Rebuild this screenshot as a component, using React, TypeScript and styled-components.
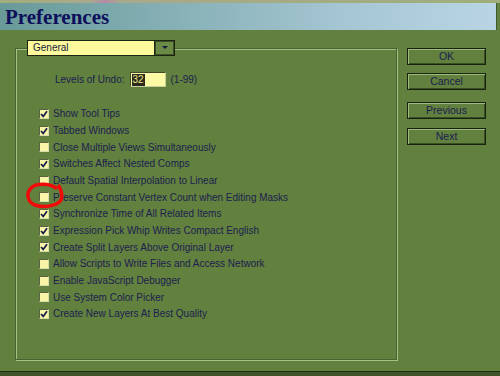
import React from 'react';
import styled, { createGlobalStyle } from 'styled-components';

const GlobalStyle = createGlobalStyle`
  html, body {
    margin: 0;
    padding: 0;
    background: #3d5228;
  }
  body {
    font-family: "Liberation Sans", Arial, sans-serif;
  }
`;

const Window = styled.div`
  position: relative;
  width: 500px;
  height: 376px;
  display: flex;
  flex-direction: column;
  background: #62803e;
  overflow: hidden;
`;

const TopStrip = styled.div`
  height: 3px;
  background: linear-gradient(90deg, #a3ad7a 0%, #a9a98c 18%, #b48aa8 21%, #a9a98c 24%, #9fae7a 100%);
`;

const TitleBar = styled.div`
  height: 27px;
  display: flex;
  align-items: center;
  padding: 2px 0 0 5px;
  box-sizing: border-box;
  margin-right: 3px;
  background: linear-gradient(90deg, #689a98 0%, #86b0b6 35%, #a6c6d4 70%, #b9d5e4 100%);
  border-right: 1px solid #3f5a2c;
`;

const Title = styled.h1`
  margin: 0;
  font-family: "Liberation Serif", "Times New Roman", serif;
  font-weight: 700;
  font-size: 21px;
  color: #0d0f5c;
`;

const Body = styled.div`
  flex: 1;
  display: flex;
  padding: 18px 0 11px 15px;
  color: #1c2150;
  font-size: 10px;
`;

const GroupBox = styled.div`
  width: 380px;
  height: 310px;
  border: 1px solid #4a6230;
  box-shadow: 1px 1px 0 #a4c286, inset 1px 1px 0 #a4c286;
  display: flex;
  flex-direction: column;
`;

const Dropdown = styled.div`
  margin: -9px 0 0 11px;
  width: 148px;
  height: 16px;
  box-sizing: border-box;
  display: flex;
  border: 1px solid #1a2410;
  background: #fdfa9e;
`;

const DropdownText = styled.span`
  flex: 1;
  padding-left: 5px;
  line-height: 14px;
  color: #1a1c3c;
`;

const DropdownButton = styled.span`
  width: 19px;
  display: flex;
  align-items: center;
  justify-content: center;
  background: #6b8a46;
  border-left: 1px solid #1a2410;
  box-shadow: inset 1px 1px 0 #3c4f26, inset -1px -1px 0 #3c4f26;

  &::after {
    content: '';
    border-left: 3px solid transparent;
    border-right: 3px solid transparent;
    border-top: 3px solid #141a40;
  }
`;

const UndoRow = styled.div`
  display: flex;
  align-items: center;
  gap: 5px;
  margin: 16px 0 0 39px;
  height: 16px;
`;

const UndoInput = styled.div`
  width: 36px;
  height: 15px;
  box-sizing: border-box;
  background: #fdfaa6;
  border-top: 1px solid #3f4a2a;
  border-left: 1px solid #3f4a2a;
  border-right: 1px solid #c9cf9a;
  border-bottom: 1px solid #c9cf9a;
  display: flex;
  align-items: center;
  padding-left: 1px;
`;

const Selected = styled.span`
  background: #2b2a1c;
  color: #f3ea8a;
  line-height: 12px;
  padding: 0 1px;
`;

const List = styled.div`
  margin: 18px 0 0 23px;
  display: flex;
  flex-direction: column;
`;

const Row = styled.div`
  height: 16.67px;
  display: flex;
  align-items: center;
  gap: 4px;
`;

const Box = styled.span`
  width: 10px;
  height: 10px;
  box-sizing: border-box;
  background: #f8f4a8;
  border-top: 1px solid #5c6244;
  border-left: 1px solid #5c6244;
  border-right: 1px solid #d8dcaa;
  border-bottom: 1px solid #d8dcaa;
  display: flex;
  align-items: center;
  justify-content: center;
`;

const Buttons = styled.div`
  margin-left: 10px;
  display: flex;
  flex-direction: column;
`;

const Button = styled.button<{ $gap: number }>`
  margin-top: ${p => p.$gap}px;
  width: 79px;
  height: 17px;
  padding: 0;
  background: #62803e;
  border: 1px solid #182210;
  box-shadow: inset 1px 1px 0 #9ebb7e, inset -1px -1px 0 #3a5022;
  color: #1c2150;
  font-family: "Liberation Sans", Arial, sans-serif;
  font-size: 10.5px;
  line-height: 14px;
`;

const BottomBar = styled.div`
  height: 5px;
  border-top: 1px solid #1e2c12;
  background: #3f5529;
`;

const Annotation = styled.svg`
  position: absolute;
  left: 0;
  top: 0;
  pointer-events: none;
`;

const Check = () => (
  <svg width="8" height="8" viewBox="0 0 8 8">
    <path d="M1 4 L3.2 6.4 L7 1.2" fill="none" stroke="#141a4a" strokeWidth="1.7" />
  </svg>
);

const options: [string, boolean][] = [
  ['Show Tool Tips', true],
  ['Tabbed Windows', true],
  ['Close Multiple Views Simultaneously', false],
  ['Switches Affect Nested Comps', true],
  ['Default Spatial Interpolation to Linear', false],
  ['Preserve Constant Vertex Count when Editing Masks', false],
  ['Synchronize Time of All Related Items', true],
  ['Expression Pick Whip Writes Compact English', true],
  ['Create Split Layers Above Original Layer', true],
  ['Allow Scripts to Write Files and Access Network', false],
  ['Enable JavaScript Debugger', false],
  ['Use System Color Picker', false],
  ['Create New Layers At Best Quality', true],
];

export default function App() {
  return (
    <Window>
      <GlobalStyle />
      <TopStrip />
      <TitleBar>
        <Title>Preferences</Title>
      </TitleBar>
      <Body>
        <GroupBox>
          <Dropdown>
            <DropdownText>General</DropdownText>
            <DropdownButton />
          </Dropdown>
          <UndoRow>
            <span>Levels of Undo:</span>
            <UndoInput><Selected>32</Selected></UndoInput>
            <span>(1-99)</span>
          </UndoRow>
          <List>
            {options.map(([label, on]) => (
              <Row key={label}>
                <Box>{on && <Check />}</Box>
                <span>{label}</span>
              </Row>
            ))}
          </List>
        </GroupBox>
        <Buttons>
          <Button $gap={0}>OK</Button>
          <Button $gap={8}>Cancel</Button>
          <Button $gap={12}>Previous</Button>
          <Button $gap={9}>Next</Button>
        </Buttons>
      </Body>
      <BottomBar />
      <Annotation width="500" height="376">
        <path
          d="M56 188 C49 183, 36 183, 31 188 C26 193, 27 202, 35 205 C44 208, 57 206, 61 200 C63 195, 61 190, 59 186"
          fill="none"
          stroke="#f00a0a"
          strokeWidth="3.5"
          strokeLinecap="round"
        />
      </Annotation>
    </Window>
  );
}
